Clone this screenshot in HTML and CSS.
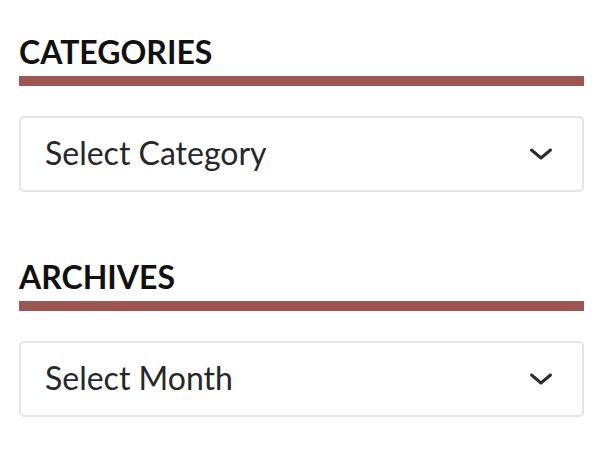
FILE: index.html
```html
<!DOCTYPE html>
<html lang="en">
<head>
<meta charset="utf-8">
<title>Sidebar</title>
<link rel="stylesheet" href="styles.css">
</head>
<body>
<aside class="sidebar">
  <section class="widget">
    <h2 class="widget-title">CATEGORIES</h2>
    <div class="select">
      <span class="select-label">Select Category</span>
      <svg class="chevron" width="24" height="14" viewBox="0 0 24 14"><path d="M2.5 3 L12 11 L21.5 3" fill="none" stroke="#2a2d31" stroke-width="3" stroke-linecap="round" stroke-linejoin="round"/></svg>
    </div>
  </section>
  <section class="widget">
    <h2 class="widget-title">ARCHIVES</h2>
    <div class="select">
      <span class="select-label">Select Month</span>
      <svg class="chevron" width="24" height="14" viewBox="0 0 24 14"><path d="M2.5 3 L12 11 L21.5 3" fill="none" stroke="#2a2d31" stroke-width="3" stroke-linecap="round" stroke-linejoin="round"/></svg>
    </div>
  </section>
</aside>
</body>
</html>
```

FILE: styles.css
```css
html, body {
  margin: 0;
  padding: 0;
  background: #ffffff;
}

.sidebar {
  width: 565px;
  padding: 33px 0 0 19px;
  font-family: Lato, "Open Sans", sans-serif;
}

.widget + .widget {
  margin-top: 66px;
}

.widget-title {
  margin: 0 0 30px;
  font-size: 32px;
  line-height: 38px;
  font-weight: 700;
  color: #111111;
  padding-bottom: 5px;
  border-bottom: 10px solid #9c5752;
}

.select {
  box-sizing: border-box;
  height: 76px;
  border: 2px solid #e3e5e8;
  border-radius: 5px;
  display: flex;
  align-items: center;
  justify-content: space-between;
  padding: 0 29px 2px 24px;
}

.select-label {
  font-size: 32px;
  line-height: 38px;
  color: #25272b;
}

.chevron {
  display: block;
  margin-top: 2px;
}
```
